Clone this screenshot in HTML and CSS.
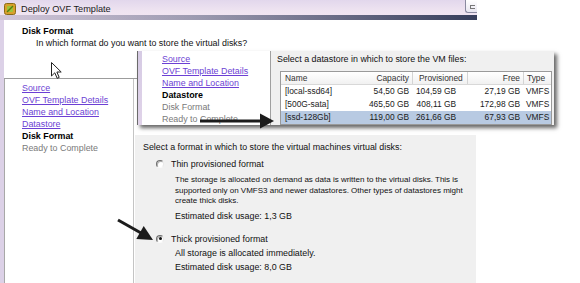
FILE: index.html
```html
<!DOCTYPE html>
<html>
<head>
<meta charset="utf-8">
<link rel="stylesheet" href="styles.css">
</head>
<body>
<div class="window">
  <div class="titlebar">
    <svg class="app-icon" width="12" height="12" viewBox="0 0 12 12">
      <rect x="0.5" y="0.5" width="11" height="11" rx="2" fill="#d8a02c" stroke="#8a6a18" stroke-width="1"/>
      <rect x="3" y="3" width="6" height="6" rx="1" fill="#9cc43c"/>
      <path d="M3 9 L9 3" stroke="#5a7a10" stroke-width="1.4"/>
    </svg>
    <span class="title">Deploy OVF Template</span>
    <span class="tb-btn"><span class="tb-mark"></span></span>
  </div>
  <div class="frame">
    <div class="header">
      <div class="h-title">Disk Format</div>
      <div class="h-sub">In which format do you want to store the virtual disks?</div>
    </div>
    <div class="main">
      <nav class="steps">
        <a class="step link">Source</a>
        <a class="step link">OVF Template Details</a>
        <a class="step link">Name and Location</a>
        <a class="step link">Datastore</a>
        <span class="step current">Disk Format</span>
        <span class="step pending">Ready to Complete</span>
      </nav>
      <div class="content">
        <div class="format-panel">
          <div class="lead">Select a format in which to store the virtual machines virtual disks:</div>
          <div class="option opt-thin"><span class="radio"></span><span>Thin provisioned format</span></div>
          <div class="desc first">The storage is allocated on demand as data is written to the virtual disks. This is<br>supported only on VMFS3 and newer datastores. Other types of datastores might<br>create thick disks.</div>
          <div class="desc est">Estimated disk usage: 1,3 GB</div>
          <div class="option opt-thick"><span class="radio checked"></span><span>Thick provisioned format</span></div>
          <div class="desc first2">All storage is allocated immediately.</div>
          <div class="desc est">Estimated disk usage: 8,0 GB</div>
        </div>
      </div>
    </div>
  </div>
</div>

<div class="inset">
  <div class="inset-frame"></div>
  <div class="inset-nav">
    <a class="step link">Source</a>
    <a class="step link">OVF Template Details</a>
    <a class="step link">Name and Location</a>
    <span class="step current">Datastore</span>
    <span class="step pending">Disk Format</span>
    <span class="step pending">Ready to Complete</span>
  </div>
  <div class="inset-pane">
    <div class="pane-lead">Select a datastore in which to store the VM files:</div>
    <div class="ds-table">
      <div class="row head">
        <span class="c-name">Name</span>
        <span class="c-cap">Capacity</span>
        <span class="c-prov">Provisioned</span>
        <span class="c-free">Free</span>
        <span class="c-type">Type</span>
      </div>
      <div class="row">
        <span class="c-name">[local-ssd64]</span>
        <span class="c-cap">54,50 GB</span>
        <span class="c-prov">104,59 GB</span>
        <span class="c-free">27,19 GB</span>
        <span class="c-type">VMFS</span>
      </div>
      <div class="row">
        <span class="c-name">[500G-sata]</span>
        <span class="c-cap">465,50 GB</span>
        <span class="c-prov">408,11 GB</span>
        <span class="c-free">172,98 GB</span>
        <span class="c-type">VMFS</span>
      </div>
      <div class="row selected">
        <span class="c-name">[ssd-128Gb]</span>
        <span class="c-cap">119,00 GB</span>
        <span class="c-prov">261,66 GB</span>
        <span class="c-free">67,93 GB</span>
        <span class="c-type">VMFS</span>
      </div>
    </div>
  </div>
</div>

<svg class="arrow arrow-right" width="80" height="18" viewBox="0 0 80 18">
  <rect x="4" y="7.5" width="63" height="3" fill="#1c1c1c"/>
  <polygon points="64,1.5 78,9 64,16.5" fill="#1c1c1c"/>
</svg>

<svg class="arrow arrow-diag" width="40" height="28" viewBox="0 0 40 28">
  <line x1="2" y1="3" x2="25" y2="16" stroke="#1c1c1c" stroke-width="3"/>
  <polygon points="20.3,22.1 27.7,9.1 37,23" fill="#1c1c1c"/>
</svg>

<svg class="cursor" width="12" height="18" viewBox="0 0 12 18">
  <path d="M0.5 0.5 L0.5 14 L3.8 10.8 L6.2 16.3 L8.2 15.4 L5.9 10 L10.2 10 Z" fill="#fff" stroke="#222" stroke-width="1" stroke-linejoin="round"/>
</svg>
</body>
</html>
```
FILE: styles.css
```css
* { box-sizing: border-box; }

body {
  margin: 0;
  width: 580px;
  height: 283px;
  overflow: hidden;
  position: relative;
  background: #fff;
  font-family: "Liberation Sans", Arial, sans-serif;
  font-size: 8.9px;
  color: #111;
}

.window {
  width: 477px;
  height: 283px;
  display: flex;
  flex-direction: column;
  background: #dcd1e7;
}

.titlebar {
  position: relative;
  height: 20px;
  flex: none;
  display: flex;
  align-items: flex-start;
  padding: 3px 0 0 4px;
  gap: 5px;
  background: linear-gradient(to bottom, #e2d7ec 0%, #efe4f1 55%, #f2e6f2 100%);
}

.titlebar::after {
  content: "";
  position: absolute;
  left: 0;
  right: 0;
  bottom: 0;
  height: 5px;
  background: linear-gradient(to right, rgba(150,140,170,0.35) 0%, rgba(90,95,125,0.55) 40%, rgba(35,45,75,0.9) 100%);
}

.app-icon { flex: none; }

.title {
  font-size: 9.2px;
  line-height: 12px;
  color: #1a1a1a;
}

.tb-btn {
  margin-left: auto;
  margin-top: -3px;
  width: 12px;
  height: 13px;
  border: 1px solid #8a8aa0;
  border-right: none;
  border-top: none;
  border-radius: 0 0 0 3px;
  background: linear-gradient(#ffffff, #e8e6f0);
  position: relative;
}

.tb-mark {
  position: absolute;
  left: 4px;
  top: 5px;
  width: 5px;
  height: 4px;
  border: 1px solid #777;
  border-right: none;
}

.frame {
  flex: 1;
  margin-left: 4px;
  background: #fff;
  display: flex;
  flex-direction: column;
}

.header {
  height: 58px;
  flex: none;
  padding: 6px 0 0 18px;
}

.h-title {
  font-weight: bold;
  line-height: 11px;
  color: #000;
}

.h-sub {
  padding-left: 14px;
  line-height: 12px;
  color: #111;
}

.main {
  flex: 1;
  display: flex;
  border-top: 1px solid #9c9c9c;
}

.steps {
  width: 130px;
  flex: none;
  display: flex;
  flex-direction: column;
  padding: 3px 0 0 17px;
  border-left: 1px solid #a8a8a8;
  border-right: 1px solid #c4c4c4;
}

.step {
  line-height: 12px;
  white-space: nowrap;
}

.link {
  color: #6c3fd4;
  text-decoration: underline;
}

.current {
  font-weight: bold;
  color: #000;
}

.pending {
  color: #7a7a7a;
}

.content {
  flex: 1;
  padding: 56px 0 0 1px;
}

.format-panel {
  width: 341px;
  height: 100%;
  background: #f0f0f0;
  padding: 6px 0 0 8px;
  color: #111;
  white-space: nowrap;
}

.lead { line-height: 12px; }

.option {
  display: flex;
  align-items: center;
  gap: 7px;
  padding-left: 13px;
  height: 12px;
}

.opt-thin { margin-top: 5px; }
.opt-thick { margin-top: 12px; }

.radio {
  width: 8px;
  height: 8px;
  border-radius: 50%;
  border: 1px solid;
  border-color: #6e6e6e #e8e8e8 #fafafa #6e6e6e;
  background: #fff;
  box-shadow: inset 1px 1px 0 #b0b0b0;
  position: relative;
  flex: none;
}

.radio.checked::after {
  content: "";
  position: absolute;
  left: 1.5px;
  top: 1.5px;
  width: 3px;
  height: 3px;
  border-radius: 50%;
  background: #111;
}

.desc {
  padding-left: 32px;
  line-height: 10px;
}

.desc.first {
  font-size: 8px;
  line-height: 10.5px;
}

.desc.first { margin-top: 5px; }
.desc.first2 { margin-top: 3px; }
.desc.est { margin-top: 4px; }

/* inset screenshot of previous step */
.inset {
  position: absolute;
  left: 137px;
  top: 51px;
  width: 417px;
  height: 74px;
  display: flex;
  background: #fff;
  box-shadow: 3px 3px 4px rgba(0,0,0,0.6);
}

.inset-frame {
  width: 5px;
  flex: none;
  background: linear-gradient(#d6cbe4, #e0d3e9);
  border-left: 1px solid #6a6a6a;
}

.inset-nav {
  width: 128px;
  flex: none;
  display: flex;
  flex-direction: column;
  padding: 2px 0 0 20px;
  background: #fff;
}

.inset-pane {
  flex: 1;
  background: #f0f0f0;
  border-left: 1px solid #a0a0a0;
  padding: 2px 0 0 6px;
}

.pane-lead { line-height: 12px; }

.ds-table {
  margin: 6px 0 0 3px;
  width: 272px;
  border: 1px solid #9a9a9a;
  background: #fff;
  font-size: 8.4px;
}

.row {
  display: grid;
  grid-template-columns: 74px 57px 55px 56px 28px;
  height: 13px;
  line-height: 13px;
  color: #1a1a1a;
  white-space: nowrap;
}

.row.head {
  height: 13px;
  line-height: 12px;
  background: linear-gradient(#ffffff, #f1f1f1);
  border-bottom: 1px solid #d8d8d8;
  color: #333;
}

.row.head .c-prov,
.row.head .c-free,
.row.head .c-type {
  border-left: 1px solid #d4d4d4;
}

.row.selected { background: #b8cae2; }

.c-name { padding-left: 4px; }
.c-cap { text-align: right; padding-right: 3px; }
.c-prov { text-align: right; padding-right: 11px; }
.row.head .c-prov { text-align: left; padding-left: 6px; padding-right: 0; }
.c-free { text-align: right; padding-right: 3px; }
.c-type { padding-left: 3px; }

.arrow, .cursor { position: absolute; }
.arrow-right { left: 196px; top: 112px; }
.arrow-diag { left: 116px; top: 217px; }
.cursor { left: 51px; top: 62px; }
```
